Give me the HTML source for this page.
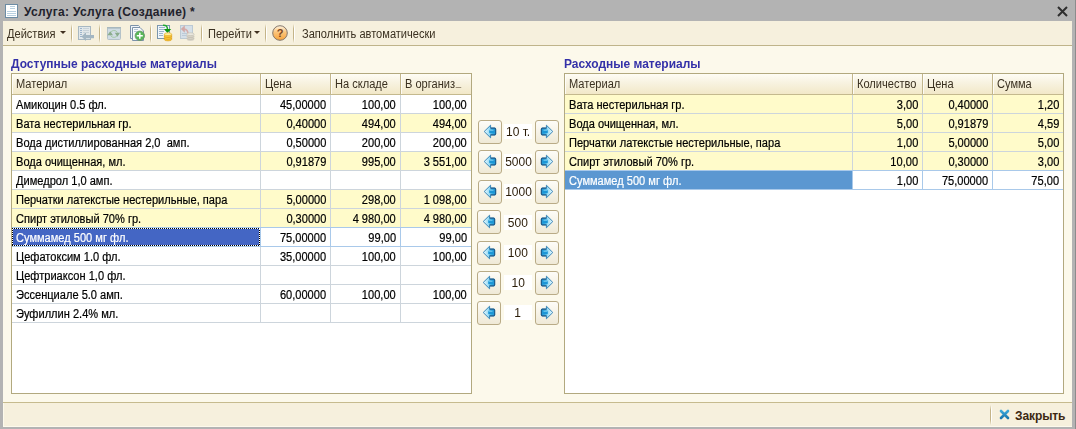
<!DOCTYPE html>
<html><head><meta charset="utf-8">
<style>
*{box-sizing:border-box;margin:0;padding:0}
html,body{width:1076px;height:429px;overflow:hidden}
body{background:#b3b3b3;font-family:"Liberation Sans",sans-serif;font-size:12px;color:#000;position:relative}
.t{display:inline-block;transform:scaleX(.922);transform-origin:0 0;-webkit-text-stroke:0.2px currentColor}
.r .t{transform-origin:100% 0}
.hc .t,.tb .t,.lbl .t{-webkit-text-stroke:0}
.lbl .t{transform-origin:50% 0}
.a{position:absolute}
#title{left:24px;top:5px;font-size:12px;font-weight:bold;letter-spacing:0.32px;color:#22222c;white-space:nowrap;line-height:15px}
#content{left:3px;top:21px;width:1069px;height:406px;background:#fcf9eb}
#toolbar{left:3px;top:21px;width:1069px;height:25px;background:#f6f0dd;border-bottom:1px solid #bfb48a}
.sep{position:absolute;top:24px;width:2px;height:19px;background:linear-gradient(90deg,#c4b488 50%,#fff 50%);-webkit-mask-image:linear-gradient(transparent,#000 25%,#000 75%,transparent)}
.tb{position:absolute;top:27px;white-space:nowrap;color:#3a3020;line-height:14px}
.dd{position:absolute;width:0;height:0;border-left:3px solid transparent;border-right:3px solid transparent;border-top:3px solid #403020}
#bottombar{left:3px;top:402px;width:1069px;height:25px;background:#f6f0dd;border-top:1px solid #c6bb8e;box-shadow:inset 1px -1px 0 #fdfaec}
.grp{position:absolute;font-weight:bold;color:#3431a8;font-size:12.5px;white-space:nowrap;line-height:14px;transform:scaleX(.957);transform-origin:0 0}
.tbl{position:absolute;background:#fff;border:1px solid #b2a97f}
.hdr{position:absolute;left:0;top:0;height:21px;background:linear-gradient(#fefdf5,#f8f3e2 40%,#f2e8c8);border-bottom:1px solid #c4b98e}
.hc{position:absolute;top:0;height:20px;border-right:1px solid #c2b68c;box-shadow:inset 1px 0 0 rgba(255,255,255,.8);padding:3px 0 0 4px;color:#3a3020;white-space:nowrap;overflow:hidden;line-height:14px}
.row{position:absolute;left:0;height:19px;border-bottom:1px solid #cdd5dc}
.c{position:absolute;top:0;height:18px;border-right:1px solid #cdd5dc;padding:3px 4px 0 4px;white-space:nowrap;overflow:hidden;line-height:14px}
.nb{border-right:none!important}
.sel{border-bottom-color:#a9c9ea;box-shadow:0 -1px 0 #a9c9ea}
.sel .c{border-right-color:#a9c9ea}
.selc{position:absolute;left:0;top:0;height:18px}
.st{position:relative;color:#fff}
.r{text-align:right}
.y{background:#fffbca}
.btn{position:absolute;width:24px;height:24px;border:1px solid #b9ab86;border-radius:3px;background:linear-gradient(#fdfcf8,#efe9d6)}
.lbl{position:absolute;left:504px;width:28px;height:15px;background:#fff;text-align:center;font-size:13px;line-height:16px;color:#2a1c08}
</style></head><body>
<div class="a" id="title">Услуга: Услуга (Создание) *</div>
<div class="a" id="content"></div>
<div class="a" id="toolbar"></div>
<div class="a" id="bottombar"></div>
<div class="a" style="left:1075px;top:0;width:1px;height:429px;background:#8c8c8c"></div>
<div class="tb" style="left:7px"><span class="t">Действия</span></div>
<div class="dd" style="left:60px;top:31px"></div>
<div class="sep" style="left:71px"></div>
<div class="sep" style="left:99px"></div>
<div class="sep" style="left:150px"></div>
<div class="sep" style="left:201px"></div>
<div class="sep" style="left:265px"></div>
<div class="sep" style="left:293px"></div>
<div class="tb" style="left:208px"><span class="t">Перейти</span></div>
<div class="dd" style="left:254px;top:31px"></div>
<div class="tb" style="left:302px"><span class="t">Заполнить автоматически</span></div>
<div class="grp" style="left:11px;top:57px">Доступные расходные материалы</div>
<div class="grp" style="left:564px;top:57px">Расходные материалы</div>
<div class="tbl" style="left:11px;top:73px;width:461px;height:321px">
<div class="hdr" style="width:459px">
<div class="hc" style="left:0px;width:249px"><span class="t">Материал</span></div>
<div class="hc" style="left:249px;width:70px"><span class="t">Цена</span></div>
<div class="hc" style="left:319px;width:70px"><span class="t">На складе</span></div>
<div class="hc nb" style="left:389px;width:70px"><span class="t">В организ<span style="display:inline-block;width:6px;height:1px;background:#9a8e78;margin-left:1px"></span></span></div>
</div>
<div class="row" style="top:21px;width:459px">
<div class="c" style="left:0px;width:249px"><span class="t">Амикоцин 0.5 фл.</span></div>
<div class="c r" style="left:249px;width:70px"><span class="t">45,00000</span></div>
<div class="c r" style="left:319px;width:70px"><span class="t">100,00</span></div>
<div class="c r nb" style="left:389px;width:70px"><span class="t">100,00</span></div>
</div>
<div class="row y" style="top:40px;width:459px">
<div class="c" style="left:0px;width:249px"><span class="t">Вата нестерильная гр.</span></div>
<div class="c r" style="left:249px;width:70px"><span class="t">0,40000</span></div>
<div class="c r" style="left:319px;width:70px"><span class="t">494,00</span></div>
<div class="c r nb" style="left:389px;width:70px"><span class="t">494,00</span></div>
</div>
<div class="row" style="top:59px;width:459px">
<div class="c" style="left:0px;width:249px"><span class="t">Вода дистиллированная 2,0&nbsp; амп.</span></div>
<div class="c r" style="left:249px;width:70px"><span class="t">0,50000</span></div>
<div class="c r" style="left:319px;width:70px"><span class="t">200,00</span></div>
<div class="c r nb" style="left:389px;width:70px"><span class="t">200,00</span></div>
</div>
<div class="row y" style="top:78px;width:459px">
<div class="c" style="left:0px;width:249px"><span class="t">Вода очищенная, мл.</span></div>
<div class="c r" style="left:249px;width:70px"><span class="t">0,91879</span></div>
<div class="c r" style="left:319px;width:70px"><span class="t">995,00</span></div>
<div class="c r nb" style="left:389px;width:70px"><span class="t">3 551,00</span></div>
</div>
<div class="row" style="top:97px;width:459px">
<div class="c" style="left:0px;width:249px"><span class="t">Димедрол 1,0 амп.</span></div>
<div class="c r" style="left:249px;width:70px"></div>
<div class="c r" style="left:319px;width:70px"></div>
<div class="c r nb" style="left:389px;width:70px"></div>
</div>
<div class="row y" style="top:116px;width:459px">
<div class="c" style="left:0px;width:249px"><span class="t">Перчатки латекстые нестерильные, пара</span></div>
<div class="c r" style="left:249px;width:70px"><span class="t">5,00000</span></div>
<div class="c r" style="left:319px;width:70px"><span class="t">298,00</span></div>
<div class="c r nb" style="left:389px;width:70px"><span class="t">1 098,00</span></div>
</div>
<div class="row y" style="top:135px;width:459px">
<div class="c" style="left:0px;width:249px"><span class="t">Спирт этиловый 70% гр.</span></div>
<div class="c r" style="left:249px;width:70px"><span class="t">0,30000</span></div>
<div class="c r" style="left:319px;width:70px"><span class="t">4 980,00</span></div>
<div class="c r nb" style="left:389px;width:70px"><span class="t">4 980,00</span></div>
</div>
<div class="row sel" style="top:154px;width:459px">
<div class="c" style="left:0px;width:249px"><div class="selc" style="width:248px;background:repeating-linear-gradient(90deg,#000 0 1px,#fff 1px 2px) 0 0/100% 1px no-repeat,repeating-linear-gradient(90deg,#000 0 1px,#fff 1px 2px) 0 100%/100% 1px no-repeat,repeating-linear-gradient(#000 0 1px,#fff 1px 2px) 0 0/1px 100% no-repeat,repeating-linear-gradient(#000 0 1px,#fff 1px 2px) 100% 0/1px 100% no-repeat,#4466c4"></div><span class="t st">Суммамед 500 мг фл.</span></div>
<div class="c r" style="left:249px;width:70px"><span class="t">75,00000</span></div>
<div class="c r" style="left:319px;width:70px"><span class="t">99,00</span></div>
<div class="c r nb" style="left:389px;width:70px"><span class="t">99,00</span></div>
</div>
<div class="row" style="top:173px;width:459px">
<div class="c" style="left:0px;width:249px"><span class="t">Цефатоксим 1.0 фл.</span></div>
<div class="c r" style="left:249px;width:70px"><span class="t">35,00000</span></div>
<div class="c r" style="left:319px;width:70px"><span class="t">100,00</span></div>
<div class="c r nb" style="left:389px;width:70px"><span class="t">100,00</span></div>
</div>
<div class="row" style="top:192px;width:459px">
<div class="c" style="left:0px;width:249px"><span class="t">Цефтриаксон 1,0 фл.</span></div>
<div class="c r" style="left:249px;width:70px"></div>
<div class="c r" style="left:319px;width:70px"></div>
<div class="c r nb" style="left:389px;width:70px"></div>
</div>
<div class="row" style="top:211px;width:459px">
<div class="c" style="left:0px;width:249px"><span class="t">Эссенциале 5.0 амп.</span></div>
<div class="c r" style="left:249px;width:70px"><span class="t">60,00000</span></div>
<div class="c r" style="left:319px;width:70px"><span class="t">100,00</span></div>
<div class="c r nb" style="left:389px;width:70px"><span class="t">100,00</span></div>
</div>
<div class="row" style="top:230px;width:459px">
<div class="c" style="left:0px;width:249px"><span class="t">Эуфиллин 2.4% мл.</span></div>
<div class="c r" style="left:249px;width:70px"></div>
<div class="c r" style="left:319px;width:70px"></div>
<div class="c r nb" style="left:389px;width:70px"></div>
</div>
</div>
<div class="tbl" style="left:564px;top:73px;width:500px;height:321px">
<div class="hdr" style="width:498px">
<div class="hc" style="left:0px;width:288px"><span class="t">Материал</span></div>
<div class="hc" style="left:288px;width:70px"><span class="t">Количество</span></div>
<div class="hc" style="left:358px;width:70px"><span class="t">Цена</span></div>
<div class="hc nb" style="left:428px;width:70px"><span class="t">Сумма</span></div>
</div>
<div class="row y" style="top:21px;width:498px">
<div class="c" style="left:0px;width:288px"><span class="t">Вата нестерильная гр.</span></div>
<div class="c r" style="left:288px;width:70px"><span class="t">3,00</span></div>
<div class="c r" style="left:358px;width:70px"><span class="t">0,40000</span></div>
<div class="c r nb" style="left:428px;width:70px"><span class="t">1,20</span></div>
</div>
<div class="row y" style="top:40px;width:498px">
<div class="c" style="left:0px;width:288px"><span class="t">Вода очищенная, мл.</span></div>
<div class="c r" style="left:288px;width:70px"><span class="t">5,00</span></div>
<div class="c r" style="left:358px;width:70px"><span class="t">0,91879</span></div>
<div class="c r nb" style="left:428px;width:70px"><span class="t">4,59</span></div>
</div>
<div class="row y" style="top:59px;width:498px">
<div class="c" style="left:0px;width:288px"><span class="t">Перчатки латекстые нестерильные, пара</span></div>
<div class="c r" style="left:288px;width:70px"><span class="t">1,00</span></div>
<div class="c r" style="left:358px;width:70px"><span class="t">5,00000</span></div>
<div class="c r nb" style="left:428px;width:70px"><span class="t">5,00</span></div>
</div>
<div class="row y" style="top:78px;width:498px">
<div class="c" style="left:0px;width:288px"><span class="t">Спирт этиловый 70% гр.</span></div>
<div class="c r" style="left:288px;width:70px"><span class="t">10,00</span></div>
<div class="c r" style="left:358px;width:70px"><span class="t">0,30000</span></div>
<div class="c r nb" style="left:428px;width:70px"><span class="t">3,00</span></div>
</div>
<div class="row sel" style="top:97px;width:498px">
<div class="c" style="left:0px;width:288px"><div class="selc" style="width:287px;background:#5b97d1"></div><span class="t st">Суммамед 500 мг фл.</span></div>
<div class="c r" style="left:288px;width:70px"><span class="t">1,00</span></div>
<div class="c r" style="left:358px;width:70px"><span class="t">75,00000</span></div>
<div class="c r nb" style="left:428px;width:70px"><span class="t">75,00</span></div>
</div>
</div>
<div class="btn" style="left:478px;top:120px"></div>
<div class="lbl" style="top:124px"><span class="t">10 т.</span></div>
<div class="btn" style="left:535px;top:120px"></div>
<div class="btn" style="left:478px;top:150px"></div>
<div class="lbl" style="top:154px"><span class="t">5000</span></div>
<div class="btn" style="left:535px;top:150px"></div>
<div class="btn" style="left:478px;top:180px"></div>
<div class="lbl" style="top:184px"><span class="t">1000</span></div>
<div class="btn" style="left:535px;top:180px"></div>
<div class="btn" style="left:477px;top:210px"></div>
<div class="lbl" style="top:215px"><span class="t">500</span></div>
<div class="btn" style="left:535px;top:210px"></div>
<div class="btn" style="left:477px;top:241px"></div>
<div class="lbl" style="top:245px"><span class="t">100</span></div>
<div class="btn" style="left:535px;top:241px"></div>
<div class="btn" style="left:477px;top:271px"></div>
<div class="lbl" style="top:275px"><span class="t">10</span></div>
<div class="btn" style="left:535px;top:271px"></div>
<div class="btn" style="left:477px;top:301px"></div>
<div class="lbl" style="top:305px"><span class="t">1</span></div>
<div class="btn" style="left:535px;top:301px"></div>
<div class="sep" style="left:990px;top:405px;height:20px"></div>
<div class="tb" style="left:1015px;top:409px;font-weight:bold;letter-spacing:-0.1px;color:#3c2812">Закрыть</div>
<svg class="a" style="left:0;top:0" width="1076" height="429" viewBox="0 0 1076 429">
<defs>
<linearGradient id="gl" x1="0" y1="0" x2="1" y2="0"><stop offset="0" stop-color="#ecfafe"/><stop offset="0.45" stop-color="#9adcf6"/><stop offset="0.72" stop-color="#3cb0e2"/><stop offset="1" stop-color="#1a8ed0"/></linearGradient>
<linearGradient id="gh" x1="0" y1="0" x2="0" y2="1"><stop offset="0" stop-color="#fff4e0"/><stop offset="0.45" stop-color="#fcc47a"/><stop offset="1" stop-color="#f7a43c"/></linearGradient>
<linearGradient id="gx" x1="0" y1="0" x2="0" y2="1"><stop offset="0" stop-color="#3aa6d8"/><stop offset="1" stop-color="#1a78b0"/></linearGradient>
</defs>
<rect x="5.5" y="4.5" width="12" height="13" fill="#fff" stroke="#6c8ca4"/>
<path d="M10 6.5h5M10 8.5h5M7 11.5h9M7 13.5h9M7 15.5h9" stroke="#b8d0e0" stroke-width="1"/>
<path d="M1058 7 L1067 16 M1067 7 L1058 16" stroke="#2e2e2e" stroke-width="2"/>
<rect x="78.5" y="26.5" width="12" height="13" fill="#e2e8ea" stroke="#a8b8c2"/>
<path d="M80 28.5h2M80 30.5h2M80 32.5h2M80 34.5h2M80 36.5h2" stroke="#9cb4cc" stroke-width="1"/>
<path d="M83 28.5h6M83 30.5h6M83 32.5h2M86 32.5h3" stroke="#c8d2d8" stroke-width="1"/>
<path d="M81.5 36.6 L86 32.3 L86 35 L94 35 L94 38.2 L86 38.2 L86 40.9 Z" fill="#a3b6c2"/>
<rect x="107.5" y="27.5" width="13" height="12" rx="1" fill="#d0dce4" stroke="#b4c2c8"/>
<rect x="107" y="27" width="14" height="1.6" fill="#a8b8bf"/>
<path d="M110.3 33 A4 4 0 0 1 117.5 32.5" fill="none" stroke="#a6caa8" stroke-width="1"/>
<path d="M117.6 35 A4 4 0 0 1 110.5 35.5" fill="none" stroke="#a6caa8" stroke-width="1"/>
<path d="M107.4 35.2 L110.2 31.3 L113 35.2 Z M114.8 32.8 L120 32.8 L117.4 36.7 Z" fill="#8aac8c"/>
<path d="M130.5 25.5 h8 l1 1 v12 h-9 Z" fill="#f0f4f8" stroke="#7c92aa"/>
<path d="M132.5 27.5 h7.5 l3.5 3.5 v9.5 h-11 Z" fill="#f8fafc" stroke="#7c92aa"/>
<path d="M134 29.5h4M134 31.5h3" stroke="#b8c8d8"/>
<circle cx="139.8" cy="35.8" r="4.7" fill="#58b858" stroke="#6a986a" stroke-width="0.9"/>
<path d="M139.8 32.8 v6 M136.8 35.8 h6" stroke="#fff" stroke-width="1.5"/>
<rect x="157.5" y="25.5" width="12" height="13" fill="#f0f6fb" stroke="#7a96ae"/>
<path d="M159 27.5h6M159 29.5h5M159 31.5h5M159 33.5h4M159 35.5h4" stroke="#9ab4cc"/>
<path d="M163 25.2 Q167.5 24.8 167.5 29.5" fill="none" stroke="#20a830" stroke-width="1.5"/>
<path d="M163.8 29 L171.2 29 L167.5 33 Z" fill="#0c9410"/>
<path d="M164.3 34.2 v5.3 a3.7 1.4 0 0 0 7.4 0 v-5.3 Z" fill="#f6c838"/>
<path d="M164.3 36.2 a3.7 1.3 0 0 0 7.4 0 M164.3 38.1 a3.7 1.3 0 0 0 7.4 0" fill="none" stroke="#e09a18" stroke-width="0.7"/>
<path d="M164.3 34.2 v5.3 a3.7 1.4 0 0 0 7.4 0 v-5.3" fill="none" stroke="#dc9a18" stroke-width="0.6"/>
<ellipse cx="168" cy="34.2" rx="3.7" ry="1.4" fill="#fff0a0" stroke="#e0a828" stroke-width="0.6"/>
<rect x="180.5" y="25.5" width="12" height="13" fill="#d6e0e8" stroke="#bccad4"/>
<path d="M182 33.5h5M182 35.5h5" stroke="#bccbd8"/>
<path d="M188 34 Q188 29.5 184 29" fill="none" stroke="#d6acaa" stroke-width="1.6"/>
<path d="M184.8 25.3 L184.8 32.8 L180.8 29 Z" fill="#d2a8a6"/>
<path d="M186.8 34.2 v5.3 a3.7 1.4 0 0 0 7.4 0 v-5.3 Z" fill="#d8d4c8"/>
<path d="M186.8 36.2 a3.7 1.3 0 0 0 7.4 0 M186.8 38.1 a3.7 1.3 0 0 0 7.4 0" fill="none" stroke="#bdb8aa" stroke-width="0.7"/>
<ellipse cx="190.5" cy="34.2" rx="3.7" ry="1.4" fill="#ebe8df" stroke="#c0bcae" stroke-width="0.6"/>
<circle cx="280" cy="33" r="7.3" fill="url(#gh)" stroke="#85786c" stroke-width="1"/>
<text x="280" y="37" text-anchor="middle" font-family="Liberation Sans" font-size="11" font-weight="bold" fill="#7c4620">?</text>
<path d="M1001 411 L1008 418 M1008 411 L1001 418" stroke="url(#gx)" stroke-width="2.6" stroke-linecap="round"/>
<g transform="translate(478,120)"><path d="M6.2 11.5 L12.6 5.2 L12.6 8.2 L16.6 8.2 Q17.6 8.2 17.6 9.2 L17.6 13.8 Q17.6 14.8 16.6 14.8 L12.6 14.8 L12.6 17.8 Z" fill="url(#gl)" stroke="#3a86b8" stroke-width="1" stroke-linejoin="round"/>
<path d="M12.6 8.2 L16.6 8.2 Q17.6 8.2 17.6 9.2 L17.6 13.8 Q17.6 14.8 16.6 14.8 L12.6 14.8" fill="none" stroke="#1d5f90" stroke-width="1.2"/>
<rect x="11.2" y="9.8" width="5" height="3.4" rx="0.8" fill="#1c96d6"/>
<path d="M11.5 10.4 h4" stroke="#7fd2f4" stroke-width="0.8"/></g>
<g transform="translate(559,120) scale(-1,1)"><path d="M6.2 11.5 L12.6 5.2 L12.6 8.2 L16.6 8.2 Q17.6 8.2 17.6 9.2 L17.6 13.8 Q17.6 14.8 16.6 14.8 L12.6 14.8 L12.6 17.8 Z" fill="url(#gl)" stroke="#3a86b8" stroke-width="1" stroke-linejoin="round"/>
<path d="M12.6 8.2 L16.6 8.2 Q17.6 8.2 17.6 9.2 L17.6 13.8 Q17.6 14.8 16.6 14.8 L12.6 14.8" fill="none" stroke="#1d5f90" stroke-width="1.2"/>
<rect x="11.2" y="9.8" width="5" height="3.4" rx="0.8" fill="#1c96d6"/>
<path d="M11.5 10.4 h4" stroke="#7fd2f4" stroke-width="0.8"/></g>
<g transform="translate(478,150)"><path d="M6.2 11.5 L12.6 5.2 L12.6 8.2 L16.6 8.2 Q17.6 8.2 17.6 9.2 L17.6 13.8 Q17.6 14.8 16.6 14.8 L12.6 14.8 L12.6 17.8 Z" fill="url(#gl)" stroke="#3a86b8" stroke-width="1" stroke-linejoin="round"/>
<path d="M12.6 8.2 L16.6 8.2 Q17.6 8.2 17.6 9.2 L17.6 13.8 Q17.6 14.8 16.6 14.8 L12.6 14.8" fill="none" stroke="#1d5f90" stroke-width="1.2"/>
<rect x="11.2" y="9.8" width="5" height="3.4" rx="0.8" fill="#1c96d6"/>
<path d="M11.5 10.4 h4" stroke="#7fd2f4" stroke-width="0.8"/></g>
<g transform="translate(559,150) scale(-1,1)"><path d="M6.2 11.5 L12.6 5.2 L12.6 8.2 L16.6 8.2 Q17.6 8.2 17.6 9.2 L17.6 13.8 Q17.6 14.8 16.6 14.8 L12.6 14.8 L12.6 17.8 Z" fill="url(#gl)" stroke="#3a86b8" stroke-width="1" stroke-linejoin="round"/>
<path d="M12.6 8.2 L16.6 8.2 Q17.6 8.2 17.6 9.2 L17.6 13.8 Q17.6 14.8 16.6 14.8 L12.6 14.8" fill="none" stroke="#1d5f90" stroke-width="1.2"/>
<rect x="11.2" y="9.8" width="5" height="3.4" rx="0.8" fill="#1c96d6"/>
<path d="M11.5 10.4 h4" stroke="#7fd2f4" stroke-width="0.8"/></g>
<g transform="translate(478,180)"><path d="M6.2 11.5 L12.6 5.2 L12.6 8.2 L16.6 8.2 Q17.6 8.2 17.6 9.2 L17.6 13.8 Q17.6 14.8 16.6 14.8 L12.6 14.8 L12.6 17.8 Z" fill="url(#gl)" stroke="#3a86b8" stroke-width="1" stroke-linejoin="round"/>
<path d="M12.6 8.2 L16.6 8.2 Q17.6 8.2 17.6 9.2 L17.6 13.8 Q17.6 14.8 16.6 14.8 L12.6 14.8" fill="none" stroke="#1d5f90" stroke-width="1.2"/>
<rect x="11.2" y="9.8" width="5" height="3.4" rx="0.8" fill="#1c96d6"/>
<path d="M11.5 10.4 h4" stroke="#7fd2f4" stroke-width="0.8"/></g>
<g transform="translate(559,180) scale(-1,1)"><path d="M6.2 11.5 L12.6 5.2 L12.6 8.2 L16.6 8.2 Q17.6 8.2 17.6 9.2 L17.6 13.8 Q17.6 14.8 16.6 14.8 L12.6 14.8 L12.6 17.8 Z" fill="url(#gl)" stroke="#3a86b8" stroke-width="1" stroke-linejoin="round"/>
<path d="M12.6 8.2 L16.6 8.2 Q17.6 8.2 17.6 9.2 L17.6 13.8 Q17.6 14.8 16.6 14.8 L12.6 14.8" fill="none" stroke="#1d5f90" stroke-width="1.2"/>
<rect x="11.2" y="9.8" width="5" height="3.4" rx="0.8" fill="#1c96d6"/>
<path d="M11.5 10.4 h4" stroke="#7fd2f4" stroke-width="0.8"/></g>
<g transform="translate(477,210)"><path d="M6.2 11.5 L12.6 5.2 L12.6 8.2 L16.6 8.2 Q17.6 8.2 17.6 9.2 L17.6 13.8 Q17.6 14.8 16.6 14.8 L12.6 14.8 L12.6 17.8 Z" fill="url(#gl)" stroke="#3a86b8" stroke-width="1" stroke-linejoin="round"/>
<path d="M12.6 8.2 L16.6 8.2 Q17.6 8.2 17.6 9.2 L17.6 13.8 Q17.6 14.8 16.6 14.8 L12.6 14.8" fill="none" stroke="#1d5f90" stroke-width="1.2"/>
<rect x="11.2" y="9.8" width="5" height="3.4" rx="0.8" fill="#1c96d6"/>
<path d="M11.5 10.4 h4" stroke="#7fd2f4" stroke-width="0.8"/></g>
<g transform="translate(559,210) scale(-1,1)"><path d="M6.2 11.5 L12.6 5.2 L12.6 8.2 L16.6 8.2 Q17.6 8.2 17.6 9.2 L17.6 13.8 Q17.6 14.8 16.6 14.8 L12.6 14.8 L12.6 17.8 Z" fill="url(#gl)" stroke="#3a86b8" stroke-width="1" stroke-linejoin="round"/>
<path d="M12.6 8.2 L16.6 8.2 Q17.6 8.2 17.6 9.2 L17.6 13.8 Q17.6 14.8 16.6 14.8 L12.6 14.8" fill="none" stroke="#1d5f90" stroke-width="1.2"/>
<rect x="11.2" y="9.8" width="5" height="3.4" rx="0.8" fill="#1c96d6"/>
<path d="M11.5 10.4 h4" stroke="#7fd2f4" stroke-width="0.8"/></g>
<g transform="translate(477,241)"><path d="M6.2 11.5 L12.6 5.2 L12.6 8.2 L16.6 8.2 Q17.6 8.2 17.6 9.2 L17.6 13.8 Q17.6 14.8 16.6 14.8 L12.6 14.8 L12.6 17.8 Z" fill="url(#gl)" stroke="#3a86b8" stroke-width="1" stroke-linejoin="round"/>
<path d="M12.6 8.2 L16.6 8.2 Q17.6 8.2 17.6 9.2 L17.6 13.8 Q17.6 14.8 16.6 14.8 L12.6 14.8" fill="none" stroke="#1d5f90" stroke-width="1.2"/>
<rect x="11.2" y="9.8" width="5" height="3.4" rx="0.8" fill="#1c96d6"/>
<path d="M11.5 10.4 h4" stroke="#7fd2f4" stroke-width="0.8"/></g>
<g transform="translate(559,241) scale(-1,1)"><path d="M6.2 11.5 L12.6 5.2 L12.6 8.2 L16.6 8.2 Q17.6 8.2 17.6 9.2 L17.6 13.8 Q17.6 14.8 16.6 14.8 L12.6 14.8 L12.6 17.8 Z" fill="url(#gl)" stroke="#3a86b8" stroke-width="1" stroke-linejoin="round"/>
<path d="M12.6 8.2 L16.6 8.2 Q17.6 8.2 17.6 9.2 L17.6 13.8 Q17.6 14.8 16.6 14.8 L12.6 14.8" fill="none" stroke="#1d5f90" stroke-width="1.2"/>
<rect x="11.2" y="9.8" width="5" height="3.4" rx="0.8" fill="#1c96d6"/>
<path d="M11.5 10.4 h4" stroke="#7fd2f4" stroke-width="0.8"/></g>
<g transform="translate(477,271)"><path d="M6.2 11.5 L12.6 5.2 L12.6 8.2 L16.6 8.2 Q17.6 8.2 17.6 9.2 L17.6 13.8 Q17.6 14.8 16.6 14.8 L12.6 14.8 L12.6 17.8 Z" fill="url(#gl)" stroke="#3a86b8" stroke-width="1" stroke-linejoin="round"/>
<path d="M12.6 8.2 L16.6 8.2 Q17.6 8.2 17.6 9.2 L17.6 13.8 Q17.6 14.8 16.6 14.8 L12.6 14.8" fill="none" stroke="#1d5f90" stroke-width="1.2"/>
<rect x="11.2" y="9.8" width="5" height="3.4" rx="0.8" fill="#1c96d6"/>
<path d="M11.5 10.4 h4" stroke="#7fd2f4" stroke-width="0.8"/></g>
<g transform="translate(559,271) scale(-1,1)"><path d="M6.2 11.5 L12.6 5.2 L12.6 8.2 L16.6 8.2 Q17.6 8.2 17.6 9.2 L17.6 13.8 Q17.6 14.8 16.6 14.8 L12.6 14.8 L12.6 17.8 Z" fill="url(#gl)" stroke="#3a86b8" stroke-width="1" stroke-linejoin="round"/>
<path d="M12.6 8.2 L16.6 8.2 Q17.6 8.2 17.6 9.2 L17.6 13.8 Q17.6 14.8 16.6 14.8 L12.6 14.8" fill="none" stroke="#1d5f90" stroke-width="1.2"/>
<rect x="11.2" y="9.8" width="5" height="3.4" rx="0.8" fill="#1c96d6"/>
<path d="M11.5 10.4 h4" stroke="#7fd2f4" stroke-width="0.8"/></g>
<g transform="translate(477,301)"><path d="M6.2 11.5 L12.6 5.2 L12.6 8.2 L16.6 8.2 Q17.6 8.2 17.6 9.2 L17.6 13.8 Q17.6 14.8 16.6 14.8 L12.6 14.8 L12.6 17.8 Z" fill="url(#gl)" stroke="#3a86b8" stroke-width="1" stroke-linejoin="round"/>
<path d="M12.6 8.2 L16.6 8.2 Q17.6 8.2 17.6 9.2 L17.6 13.8 Q17.6 14.8 16.6 14.8 L12.6 14.8" fill="none" stroke="#1d5f90" stroke-width="1.2"/>
<rect x="11.2" y="9.8" width="5" height="3.4" rx="0.8" fill="#1c96d6"/>
<path d="M11.5 10.4 h4" stroke="#7fd2f4" stroke-width="0.8"/></g>
<g transform="translate(559,301) scale(-1,1)"><path d="M6.2 11.5 L12.6 5.2 L12.6 8.2 L16.6 8.2 Q17.6 8.2 17.6 9.2 L17.6 13.8 Q17.6 14.8 16.6 14.8 L12.6 14.8 L12.6 17.8 Z" fill="url(#gl)" stroke="#3a86b8" stroke-width="1" stroke-linejoin="round"/>
<path d="M12.6 8.2 L16.6 8.2 Q17.6 8.2 17.6 9.2 L17.6 13.8 Q17.6 14.8 16.6 14.8 L12.6 14.8" fill="none" stroke="#1d5f90" stroke-width="1.2"/>
<rect x="11.2" y="9.8" width="5" height="3.4" rx="0.8" fill="#1c96d6"/>
<path d="M11.5 10.4 h4" stroke="#7fd2f4" stroke-width="0.8"/></g>
</svg>
</body></html>
